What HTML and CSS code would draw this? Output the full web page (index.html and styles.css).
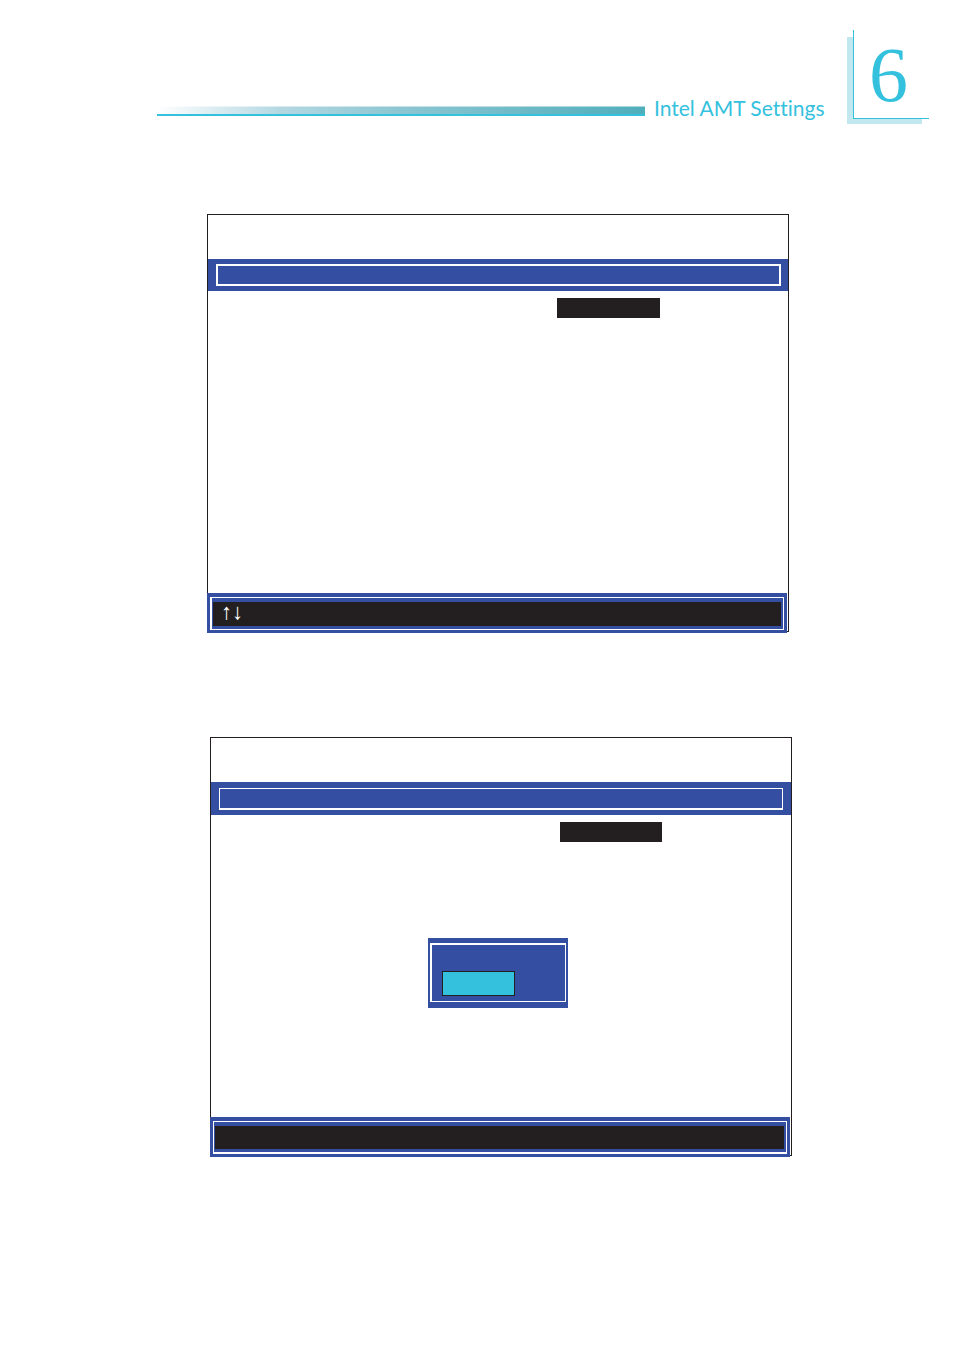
FILE: index.html
```html
<!DOCTYPE html>
<html lang="en">
<head>
  <meta charset="UTF-8">
  <meta name="viewport" content="width=device-width, initial-scale=1.0">
  <title>Intel AMT Settings</title>
  <link rel="stylesheet" href="styles.css">
</head>
<body>
  <header class="page-header">
    <div class="rule"></div>
    <h1>Intel AMT Settings</h1>
    <div class="chapter">6</div>
  </header>

  <main>
    <section class="screen">
      <div class="title-bar"><div class="title-frame"></div></div>
      <div class="screen-body">
        <div class="selected"></div>
      </div>
      <div class="key-bar">
        <div class="key-frame">
          <div class="keys">↑↓</div>
        </div>
      </div>
    </section>

    <section class="screen screen-prompt">
      <div class="title-bar"><div class="title-frame"></div></div>
      <div class="screen-body">
        <div class="selected"></div>
        <div class="prompt">
          <div class="prompt-frame">
            <button type="button" class="prompt-option" aria-label="Select"></button>
          </div>
        </div>
      </div>
      <div class="key-bar">
        <div class="key-frame">
          <div class="keys"></div>
        </div>
      </div>
    </section>
  </main>
</body>
</html>
```
FILE: styles.css
```css
* {
  box-sizing: border-box;
}
body {
  margin: 0;
  background: #fff;
  font-family: Lato, "Liberation Sans", sans-serif;
}

/* header */
.page-header {
  display: flex;
  align-items: flex-end;
  padding: 30px 25px 0 157px;
}
.rule {
  flex: 1;
  height: 10px;
  margin-bottom: 3px;
  border-bottom: 2px solid #34c1de;
  background: linear-gradient(to right, #fff, #b4d8e2 25%, #8cc6d2 50%, #4faebb);
  box-shadow: inset 0 1px rgba(255, 255, 255, 0.5);
}
h1 {
  width: 208px;
  margin: 0;
  padding-left: 9px;
  font-size: 21px;
  line-height: 22px;
  font-weight: 400;
  font-variant-ligatures: none;
  color: #34c1de;
}
.chapter {
  position: relative;
  width: 76px;
  height: 89px;
  padding-left: 15px;
  border-left: 1px solid #34c1de;
  border-bottom: 1px solid #34c1de;
  background: #fff;
  font-family: "Liberation Serif", serif;
  font-size: 78px;
  line-height: 90px;
  color: #34c1de;
}
.chapter::before {
  content: "";
  position: absolute;
  z-index: -1;
  top: 7px;
  right: 7px;
  bottom: -6px;
  left: -7px;
  background: #c1e7ef;
}

/* setup screens */
.screen {
  margin: 95px 165px 0 207px;
  border: 1px solid #231f20;
}
.title-bar {
  margin-top: 44px;
  padding: 5px 7px 5px 8px;
  background: #344ea2;
}
.title-frame {
  height: 22px;
  border: 2px solid #fff;
}
.screen-body {
  position: relative;
  height: 302px;
  padding: 7px 128px 0 0;
}
.selected {
  width: 103px;
  height: 20px;
  margin-left: auto;
  background: #231f20;
}
.key-bar {
  margin: 0 1px -2px -1px;
  padding: 4px 3px 3px;
  background: #344ea2;
}
.key-frame {
  padding: 4px 2px 3px 1px;
  border: 1px solid #fff;
  border-left-width: 2px;
}
.keys {
  height: 24px;
  padding-left: 8px;
  background: #231f20;
  font-family: "Liberation Serif", serif;
  font-size: 22px;
  line-height: 20px;
  color: #fff;
}

/* screen with the prompt open */
.screen-prompt {
  margin: 105px 162px 193px 210px;
}
.screen-prompt .title-bar {
  padding: 6px 8px 5px;
}
.screen-prompt .title-frame {
  border-width: 1px 1px 2px;
}
.screen-prompt .screen-body {
  padding-right: 129px;
}
.screen-prompt .selected {
  width: 102px;
}
.screen-prompt .key-frame {
  border-width: 1px 1px 2px;
}
.screen-prompt .keys {
  height: 23px;
}
.prompt {
  position: absolute;
  top: 123px;
  left: calc(50% - 73px);
  width: 140px;
  padding: 5px 2px 6px;
  background: #344ea2;
}
.prompt-frame {
  padding: 26px 10px 5px;
  border: solid #fff;
  border-width: 2px 1px 1px 2px;
}
.prompt-option {
  display: block;
  width: 73px;
  height: 25px;
  border: 1px solid #231f20;
  background: #34c1de;
}
```
